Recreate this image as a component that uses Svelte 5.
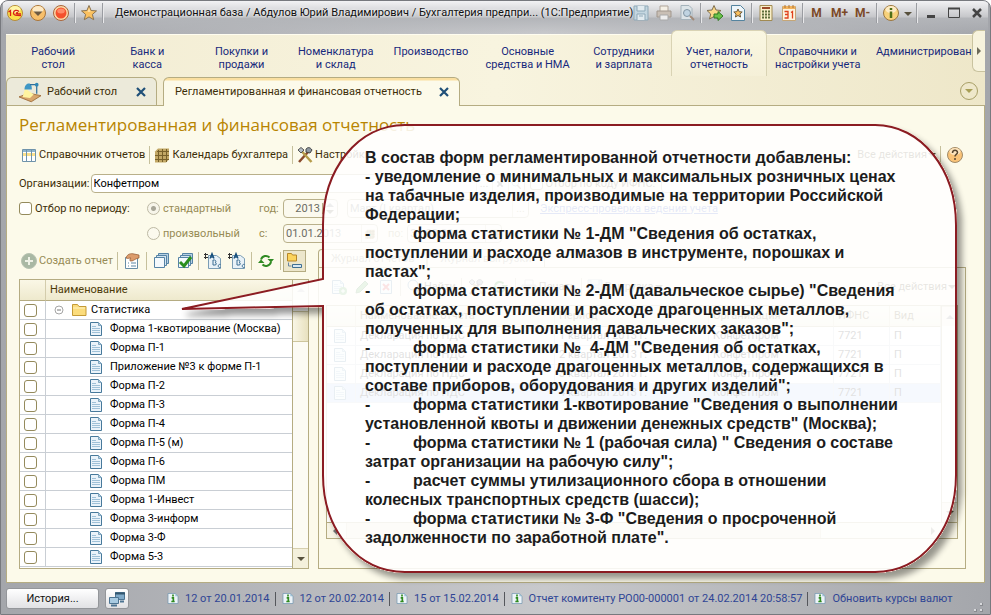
<script>
  const sections = [
    { label: 'Рабочий\nстол', size: 94 },
    { label: 'Банк и\nкасса', size: 94 },
    { label: 'Покупки и\nпродажи', size: 94 },
    { label: 'Номенклатура\nи склад', size: 94 },
    { label: 'Производство', size: 96 },
    { label: 'Основные\nсредства и НМА', size: 97 },
    { label: 'Сотрудники\nи зарплата', size: 95 },
    { label: 'Учет, налоги,\nотчетность', size: 95 },
    { label: 'Справочники и\nнастройки учета', size: 102 },
    { label: 'Администрировани', size: 116 }
  ];

  const forms = [
    'Форма 1-квотирование (Москва)',
    'Форма П-1',
    'Приложение №3 к форме П-1',
    'Форма П-2',
    'Форма П-3',
    'Форма П-4',
    'Форма П-5 (м)',
    'Форма П-6',
    'Форма ПМ',
    'Форма 1-Инвест',
    'Форма 3-информ',
    'Форма 3-Ф',
    'Форма 5-3'
  ];

  const reports = [1, 2, 3, 4].map((quarter) => ({
    name: 'Декларация по НДС',
    period: `${quarter} квартал 2013 г.`,
    company: 'Конфетпром',
    office: '7721',
    kind: 'П'
  }));

  const messages = [
    '12 от 20.01.2014',
    '12 от 20.02.2014',
    '15 от 15.02.2014',
    'Отчет комитенту РО00-000001 от 24.02.2014 20:58:57',
    'Обновить курсы валют'
  ];

  const note = [
    'В состав форм регламентированной отчетности добавлены:',
    '- уведомление о минимальных и максимальных розничных ценах',
    'на табачные изделия, производимые на территории Российской',
    'Федерации;',
    '-\tформа статистики № 1-ДМ "Сведения об остатках,',
    'поступлении и расходе алмазов в инструменте, порошках и',
    'пастах";',
    '-\tформа статистики № 2-ДМ (давальческое сырье) "Сведения',
    'об остатках, поступлении и расходе драгоценных металлов,',
    'полученных для выполнения давальческих заказов";',
    '-\tформа статистики №  4-ДМ "Сведения об остатках,',
    'поступлении и расходе драгоценных металлов, содержащихся в',
    'составе приборов, оборудования и других изделий";',
    '-\tформа статистики 1-квотирование "Сведения о выполнении',
    'установленной квоты и движении денежных средств" (Москва);',
    '-\tформа статистики № 1 (рабочая сила) " Сведения о составе',
    'затрат организации на рабочую силу";',
    '-\tрасчет суммы утилизационного сбора в отношении',
    'колесных транспортных средств (шасси);',
    '-\tформа статистики № 3-Ф "Сведения о просроченной',
    'задолженности по заработной плате".'
  ].join('\n');

  let activeSection = $state(7);
  let periodFilter = $state(false);
</script>

{#snippet icon(name)}
  <svg class="icon" width="18" height="18" viewBox="0 0 18 18" fill="none" aria-hidden="true">
    {#if name === 'logo'}
      <circle cx="9" cy="9" r="7.5" fill="#fbe04a" stroke="#b58a3a" />
      <ellipse cx="9" cy="5.5" rx="5.5" ry="3.5" fill="#fff6a8" />
      <path d="M2.500 8 4.500 6.500V12M13 7.500C11 5.500 7.500 6 7.500 9c0 2.500 2 2.500 7.500 2.500M12 8.800c-2-.5-2 1-1 1h4" stroke="#d8201a" stroke-width="1.300" />
    {:else if name === 'menu'}
      <circle cx="9" cy="9" r="7.5" fill="#f7bf6a" stroke="#a8743a" />
      <ellipse cx="9" cy="5.5" rx="5.5" ry="3.5" fill="#fde9c4" />
      <path d="M4.5 7.5h9L9 12z" fill="#6d5a42" />
    {:else if name === 'record'}
      <circle cx="9" cy="9" r="7.5" fill="#fbd9a8" stroke="#a8643a" />
      <circle cx="9" cy="9" r="5.5" fill="#f4502c" />
      <ellipse cx="9" cy="7" rx="3.8" ry="2.5" fill="#ff8a68" />
    {:else if name === 'star'}
      <path d="m9 1.500 2.100 5 5.400.4-4.100 3.500 1.300 5.300L9 12.900l-4.700 2.800 1.300-5.300L1.500 6.900l5.400-.4z" fill="#fbc15f" stroke="#8a7350" />
      <path d="m9 4 1.200 3.500 3.300.2H4.500l3.300-.2z" fill="#fee6b4" />
    {:else if name === 'save'}
      <path d="M2 2h14v14H2z" fill="#c4d6e0" stroke="#8fa9b8" />
      <path d="M5 2v5h8V2M5 16v-6h8v6M7 12h4" fill="#e2ebf0" stroke="#8fa9b8" />
    {:else if name === 'print'}
      <path d="M5 8V2h8v6" fill="#f5f0e6" stroke="#b0a59a" />
      <path d="M2 7h14v6H2z" fill="#c9bfb5" stroke="#a1978d" />
      <path d="M5 11h8v5H5z" fill="#eee" stroke="#a9a9a9" />
    {:else if name === 'preview'}
      <path d="M3 1.5h8l3 3v11H3z" fill="#dce4e8" stroke="#a5b3bb" />
      <circle cx="9" cy="9" r="3.5" fill="#c0d4e2" stroke="#8195a3" />
      <path d="m12 12 4 4" stroke="#a28a78" stroke-width="2" />
    {:else if name === 'stargo'}
      <path d="m8 1.5 2 4.5 5 .5-3.700 3.400 1.200 5L8 12.500 3.500 15l1.200-5L1 6.500 6 6z" fill="#fbd98a" stroke="#7f6f50" />
      <path d="M8 10h4V7.500l5 4.500-5 4.500V14H8z" fill="#6cc24a" stroke="#2f7a22" />
    {:else if name === 'fav'}
      <path d="M2.500 1.500h9l4 4v11h-13z" fill="#eef6fb" stroke="#55849f" />
      <path d="m9 5 1.200 2.700 3 .3-2.300 2 .7 3L9 11.500 6.400 13l.7-3-2.300-2 3-.3z" fill="#fbc15f" stroke="#6f5c3c" />
    {:else if name === 'calc'}
      <path d="M3 1.500h12v15H3z" fill="#f9efc8" stroke="#a18a52" />
      <path d="M5 4h8" stroke="#9c4a2a" stroke-width="2" />
      <path d="M5 7.500h2m1 0h2m1 0h2M5 10.500h2m1 0h2m1 0h2M5 13.500h2m1 0h2m1 0h2" stroke="#5d6e3a" stroke-width="2" />
    {:else if name === 'calendar'}
      <path d="M2.500 2.500h13v14h-13z" fill="#fdf3df" stroke="#c5a677" />
      <path d="M3 2h12v3H3z" fill="#f2b25c" />
      <path d="M5 1v3M9 1v3M13 1v3" stroke="#a8743a" />
      <path d="M4.500 7.500h3.500v6.500H4.500M5 10.500h3M11 8.500l1.500-1V14.500" stroke="#e0401c" stroke-width="1.300" />
    {:else if name === 'info'}
      <circle cx="9" cy="9" r="7.500" fill="#f8d27c" stroke="#9a7640" />
      <ellipse cx="9" cy="5.500" rx="5.500" ry="3.500" fill="#fdebc4" />
      <path d="M9 4v2M9 7.500V14" stroke="#4f6f18" stroke-width="2.500" />
    {:else if name === 'help'}
      <circle cx="9" cy="9" r="7.500" fill="#fac377" stroke="#a08a68" />
      <ellipse cx="9" cy="5.500" rx="5.500" ry="3.500" fill="#fde4bd" />
      <path d="M6.500 7c0-3.500 5-3.500 5-.5 0 2-2.500 1.800-2.500 4M9 12v2" stroke="#5a4830" stroke-width="1.500" />
    {:else if name === 'lamp'}
      <path d="m0 13 8-3 10 2-8 5z" fill="#d8a66c" stroke="#9b6a38" stroke-width=".7" />
      <path d="M5 6 3 13l6 1 3-3z" fill="#fff4a0" />
      <path d="M4.500 7c0-3 1.500-5 3.500-5s2.500 2 2.500 5z" fill="#3f97c5" />
      <path d="M9 3h5.500v7.500" stroke="#2f6f9c" />
      <circle cx="14.500" cy="3" r="1.500" fill="#2f87b5" />
    {:else if name === 'columns'}
      <path d="M2.500 3.500h13v12h-13z" fill="#fff" stroke="#6f93ab" />
      <path d="M3 4h12v2H3z" fill="#8fb4cc" />
      <path d="M3 7h12v3H3z" fill="#fbe08c" />
      <path d="M6.500 4v11M11.500 4v11" stroke="#6f93ab" />
    {:else if name === 'grid'}
      <path d="M5 2.500h11v11l-3 3H2v-11z" fill="#c2a765" />
      <path d="M2 9.500h14M2 13.500h14M5.500 4v12M9.500 3v13M13.500 3v13M4 5.500h12" stroke="#77602a" />
    {:else if name === 'tools'}
      <path d="m3 16 9-10" stroke="#8a4a2c" stroke-width="2.500" />
      <path d="m15.500 16-10-11" stroke="#b59b4a" stroke-width="2.500" />
      <path d="m2 4 3-2.500L8 4 5 7z" fill="#b4bcc2" stroke="#555" />
      <path d="M10 3c2-2 4-2 6 1l-2 3-4-1z" fill="#8f98a0" stroke="#444" />
    {:else if name === 'add'}
      <circle cx="9" cy="9" r="7.500" fill="#a9b8a4" stroke="#b8c3b2" />
      <path d="M9 5v8M5 9h8" stroke="#eef1e6" stroke-width="2" />
    {:else if name === 'hand'}
      <path d="M2.500 5.500h12v11h-12z" fill="#fff" stroke="#678da6" />
      <path d="M5 11h1m2 0h5M5 14h1m2 0h5" stroke="#5c87a3" />
      <path d="M3 6c1-4 5-5 8-4l5 1v3c-5 1-5 3-8 3-2 0-1-2 0-3-2 0-3 1-5 0z" fill="#dc9c6c" stroke="#90552c" stroke-width=".7" />
    {:else if name === 'stack' || name === 'checks'}
      <path d="M6.500 1.500h10v10h-10z" fill="#b6d0e2" stroke="#5583a5" />
      <path d="M4.500 3.500h10v10h-10z" fill="#d5e5f0" stroke="#5583a5" />
      <path d="M2.500 5.500h10v10h-10z" fill="#f4f9fc" stroke="#5583a5" />
      {#if name === 'checks'}
        <path d="m4 10 4 4 7-9" stroke="#2b8f1e" stroke-width="3" />
      {/if}
    {:else if name === 'sort' || name === 'sortback'}
      <path d="M4.500 3.500h8l4 3v10h-12z" fill="#e8f1f7" stroke="#7b9db5" />
      <path d="M0 2.500h4M0 5.500h4M1.500 1v6" stroke="#333" />
      <path d="m6 6.500 2-5 2 5M7 5h2" stroke="#174f7c" stroke-width="1.300" />
      <path d="M9 8v5h2c2 0 1.500-2.500 0-2.500 1.500 0 1-2.500-.5-2.500zM16.500 12.500c-3-1-3 4 0 3" stroke="#3c6f94" />
    {:else if name === 'refresh'}
      <path d="M4 7.500C5.500 3.500 10 3 12.500 5.500M14 10c-1 4-6 5-8.500 2.500" stroke="#2f8a22" stroke-width="2" />
      <path d="M10.500 7h6.500L14 10.500zM7.500 11H1l3-3.500z" fill="#2f8a22" />
    {:else if name === 'tree'}
      <path d="M2.500 1.500h4l1 1.500h4v6h-9z" fill="#fbd35c" stroke="#b5862a" />
      <path d="M7.500 12.500h9v3h-9z" fill="#d7e8f4" stroke="#3f6f92" />
      <path d="M3.500 10.500v3.500h3" stroke="#6a86a0" />
    {:else if name === 'folder'}
      <path d="M2.500 3.500h5l1.500 2h7v9h-13.500z" fill="#fbdc7c" stroke="#c49a36" />
      <path d="M3 7h12" stroke="#fff2c0" />
    {:else if name === 'doc' || name === 'newdoc'}
      <path d="M3.500 2.500h8l3 3v10h-11z" fill="#eaf3fa" stroke="#47799b" />
      <path d="M11.500 2.500v3h3" fill="#b8d4e6" stroke="#7fa5be" />
      <path d="M5 6.500h4M5 8.500h8M5 10.500h8M5 12.500h8" stroke="#9fc1d8" />
      {#if name === 'newdoc'}
        <circle cx="14" cy="13" r="4" fill="#4fa446" />
        <path d="M14 11v4M12 13h4" stroke="#fff" />
      {/if}
    {:else if name === 'pencil'}
      <path d="m3 15 1-4 8-8 3 3-8 8z" fill="#58b046" stroke="#34732a" />
    {:else if name === 'delete'}
      <path d="M3.500 2.500h11v13h-11z" fill="#eaf3fa" stroke="#47799b" />
      <path d="m6 6 6 6M12 6l-6 6" stroke="#e02020" stroke-width="2" />
    {:else if name === 'find'}
      <circle cx="8" cy="7" r="5" stroke="#47799b" />
      <path d="m11 11 5 5" stroke="#8c6548" stroke-width="2" />
    {:else if name === 'message'}
      <path d="M1.500 1.500h11l4 4v11h-15z" fill="#edf4f8" stroke="#6b93ad" />
      <path d="M12.500 1.500v4h4z" fill="#9cc0d6" />
      <path d="M9 3V6M7 8h2.500v5.500M6.500 13.500h5" stroke="#2f8a1e" stroke-width="2.500" />
    {:else if name === 'windows'}
      <path d="M7.500 2.500h9v7h-9z" fill="#7fa9c8" stroke="#4d7492" />
      <path d="M7 3.500h10" stroke="#33566f" stroke-width="2" />
      <path d="M1.500 7.500h9v6h-9z" fill="#a9cbe2" stroke="#4d7492" />
      <path d="M3 15.500h6M12 11.500h4" stroke="#4d7492" stroke-width="2" />
    {:else if name === 'minimize'}
      <path d="M5 12.500h8" stroke="#444" stroke-width="3" />
    {:else if name === 'maximize'}
      <path d="M3.500 4.500h11v9h-11z" stroke="#444" />
      <path d="M3 4.500h12" stroke="#444" stroke-width="2" />
    {:else if name === 'close'}
      <path d="m5 5 8 8M13 5l-8 8" stroke="#444" stroke-width="2.500" />
    {:else if name === 'cross'}
      <path d="m5 5 8 8M13 5l-8 8" stroke="#1f4f78" stroke-width="2.200" />
    {:else if name === 'collapse'}
      <circle cx="9" cy="9" r="4" stroke="#a5a5a5" />
      <path d="M7 9h4" stroke="#777" />
    {/if}
  </svg>
{/snippet}

{#snippet tool(name, title)}
  <button class="tool" {title} aria-label={title}>{@render icon(name)}</button>
{/snippet}

<div class="window">
  <header class="titlebar">
    {@render tool('logo', 'Главное меню')}
    {@render tool('menu', 'Меню')}
    {@render tool('record', 'Действия')}
    <i class="sep"></i>
    {@render tool('star', 'Избранное')}
    <i class="sep"></i>
    <span class="title">Демонстрационная база / Абдулов Юрий Владимирович / Бухгалтерия предпри... (1С:Предприятие)</span>
    {@render tool('save', 'Сохранить')}
    {@render tool('print', 'Печать')}
    {@render tool('preview', 'Просмотр')}
    <i class="sep"></i>
    {@render tool('stargo', 'Добавить в избранное')}
    {@render tool('fav', 'Избранное')}
    <i class="sep"></i>
    {@render tool('calc', 'Калькулятор')}
    {@render tool('calendar', 'Календарь')}
    <i class="sep"></i>
    <button class="tool memory">M</button>
    <button class="tool memory">M+</button>
    <button class="tool memory">M-</button>
    <i class="sep"></i>
    {@render tool('info', 'Справка')}
    <button class="more" aria-label="Еще"><i class="arrow down"></i></button>
    <i class="sep"></i>
    <div class="system">
      {@render tool('minimize', 'Свернуть')}
      {@render tool('maximize', 'Развернуть')}
      {@render tool('close', 'Закрыть')}
    </div>
  </header>

  <div class="top">
    <nav class="sections">
      {#each sections as section, i}
        <button
          class="section"
          class:active={activeSection === i}
          style="flex-basis: {section.size}px"
          onclick={() => (activeSection = i)}
        >{section.label}</button>
      {/each}
      <button class="scroll-right" aria-label="Вперед"><i class="arrow right"></i></button>
    </nav>
    <div class="doc-tabs">
      <div class="doc-tab home">
        {@render icon('lamp')}
        <span>Рабочий стол</span>
        <button aria-label="Закрыть">{@render icon('cross')}</button>
      </div>
      <div class="doc-tab current">
        <span>Регламентированная и финансовая отчетность</span>
        <button aria-label="Закрыть">{@render icon('cross')}</button>
      </div>
      <button class="round" aria-label="Список окон"><i class="arrow down"></i></button>
    </div>
  </div>

  <main class="page">
    <h1>Регламентированная и финансовая отчетность</h1>

    <div class="commands">
      <button class="command">{@render icon('columns')}Справочник отчетов</button>
      <i class="sep"></i>
      <button class="command">{@render icon('grid')}Календарь бухгалтера</button>
      <i class="sep"></i>
      <button class="command">{@render icon('tools')}Настройки</button>
      <span class="spacer"></span>
      <button class="command">Все действия <i class="arrow down"></i></button>
      <i class="sep"></i>
      {@render tool('help', 'Справка')}
    </div>

    <div class="filters">
      <div class="line">
        <label for="org">Организации:</label>
        <div class="field org">
          <input id="org" value="Конфетпром" />
          <button aria-label="Выбрать">...</button>
          <button aria-label="Очистить">{@render icon('close')}</button>
          <button aria-label="Открыть">{@render icon('find')}</button>
        </div>
        <label class="check ifns"><input type="checkbox" />Отбор по коду ИФНС:</label>
        <div class="field code"><input aria-label="Код ИФНС" /></div>
      </div>
      <div class="line period">
        <label class="check"><input type="checkbox" bind:checked={periodFilter} />Отбор по периоду:</label>
        <label class="radio"><input type="radio" name="period" checked disabled />стандартный</label>
        <label class="short" for="year">год:</label>
        <div class="field off year">
          <input id="year" value="2013" disabled />
          <span class="spin"><i class="arrow up"></i><i class="arrow down"></i></span>
        </div>
        <div class="field off quarter">
          <input aria-label="Квартал" value="Март (I квартал)" disabled />
          <button disabled aria-label="Выбрать">...</button>
        </div>
        <a href="#check">Экспресс-проверка ведения учета</a>
      </div>
      <div class="line period">
        <span class="check"></span>
        <label class="radio"><input type="radio" name="period" disabled />произвольный</label>
        <label class="short" for="from">с:</label>
        <div class="field off date">
          <input id="from" value="01.01.2013" disabled />
          <button disabled aria-label="Календарь">{@render icon('grid')}</button>
        </div>
        <label class="until" for="to">по:</label>
        <div class="field off date">
          <input id="to" value="31.03.2013" disabled />
          <button disabled aria-label="Календарь">{@render icon('grid')}</button>
        </div>
      </div>
    </div>

    <div class="columns">
      <section class="forms">
        <div class="commands">
          <button class="command muted" disabled>{@render icon('add')}Создать отчет</button>
          <i class="sep"></i>
          {@render tool('hand', 'Изменить')}
          <i class="sep"></i>
          {@render tool('stack', 'Снять флажки')}
          {@render tool('checks', 'Установить флажки')}
          <i class="sep"></i>
          {@render tool('sort', 'Сортировать')}
          {@render tool('sortback', 'Сортировать обратно')}
          <i class="sep"></i>
          {@render tool('refresh', 'Обновить')}
          <i class="sep"></i>
          <button class="tool pressed" aria-label="По группам">{@render icon('tree')}</button>
        </div>
        <div class="list">
          <table>
            <thead>
              <tr><th class="mark"></th><th>Наименование</th></tr>
            </thead>
            <tbody>
              <tr>
                <td class="mark"><input type="checkbox" aria-label="Статистика" /></td>
                <td><span class="group">{@render icon('collapse')}{@render icon('folder')}Статистика</span></td>
              </tr>
              {#each forms as form}
                <tr>
                  <td class="mark"><input type="checkbox" aria-label={form} /></td>
                  <td><span class="item">{@render icon('doc')}{form}</span></td>
                </tr>
              {/each}
            </tbody>
          </table>
          <div class="scrollbar" aria-hidden="true">
            <span class="cap faint"><i class="arrow up"></i></span>
            <span class="thumb"></span>
            <span class="spacer"></span>
            <span class="cap"><i class="arrow down"></i></span>
          </div>
        </div>
      </section>

      <section class="journal">
        <div class="journal-tabs">
          <button class="chosen">Журнал отчетов</button>
          <button>Журнал выгрузки</button>
        </div>
        <div class="panel">
          <div class="commands">
            {@render tool('newdoc', 'Создать')}
            {@render tool('pencil', 'Изменить')}
            {@render tool('delete', 'Удалить')}
            <i class="sep"></i>
            <button class="command">{@render icon('find')}Найти</button>
            <i class="sep"></i>
            {@render tool('tools', 'Настроить')}
            {@render tool('refresh', 'Обновить')}
            <i class="sep"></i>
            <button class="command">{@render icon('print')}Печать</button>
            <i class="sep"></i>
            <button class="command">{@render icon('save')}Выгрузка <i class="arrow down"></i></button>
            <span class="spacer"></span>
            <button class="command">Все действия <i class="arrow down"></i></button>
          </div>
          <div class="reports">
            <div class="reports-body">
              <table>
                <thead>
                  <tr>
                    <th class="pic"></th>
                    <th class="name">Наименование отчета</th>
                    <th class="quarter-col">Период</th>
                    <th>Организация</th>
                    <th class="office">ИФНС</th>
                    <th class="kind">Вид</th>
                  </tr>
                </thead>
                <tbody>
                  {#each reports as report, i}
                    <tr class:selected={i === 3}>
                      <td class="pic">{@render icon('doc')}</td>
                      <td>{report.name}</td>
                      <td>{report.period}</td>
                      <td>{report.company}</td>
                      <td>{report.office}</td>
                      <td>{report.kind}</td>
                    </tr>
                  {/each}
                </tbody>
              </table>
              <div class="scrollbar" aria-hidden="true">
                <span class="cap"><i class="arrow up"></i></span>
                <span class="spacer"></span>
                <span class="cap"><i class="arrow down"></i></span>
              </div>
            </div>
            <div class="hscroll" aria-hidden="true">
              <i class="arrow left"></i>
              <span class="hthumb"></span>
              <i class="arrow right"></i>
            </div>
          </div>
        </div>
      </section>
    </div>
  </main>

  <footer class="statusbar">
    <button class="push history">История...</button>
    <button class="push" aria-label="Окна">{@render icon('windows')}</button>
    <div class="messages">
      {#each messages as message}
        <a href="#message">{@render icon('message')}{message}</a>
      {/each}
    </div>
    <svg class="grip" width="12" height="12" viewBox="0 0 12 12" aria-hidden="true">
      <path d="M7 1h3v3H7zM7 7h3v3H7zM1 7h3v3H1z" fill="#888a8f" />
      <path d="M7 1h2v2H7zM7 7h2v2H7zM1 7h2v2H1z" fill="#d8d9dc" />
    </svg>
  </footer>

  <aside class="callout">
    <svg width="800" height="470" viewBox="0 0 800 470" aria-hidden="true">
      <!-- the shadow is cut out under the balloon, so the page shows through it clean -->
      <filter id="shadow" x="-5%" y="-5%" width="110%" height="110%">
        <feComponentTransfer in="SourceAlpha" result="solid">
          <feFuncA type="linear" slope="8" />
        </feComponentTransfer>
        <feGaussianBlur in="solid" stdDeviation="3" />
        <feOffset dx="5" dy="6" />
        <feComponentTransfer>
          <feFuncA type="linear" slope="0.4" />
        </feComponentTransfer>
        <feComposite in2="solid" operator="out" result="cast" />
        <feMerge>
          <feMergeNode in="cast" />
          <feMergeNode in="SourceGraphic" />
        </feMerge>
      </filter>
      <path
        filter="url(#shadow)"
        d="M4 189 145 159V105C145 49 180 5 227 5H697C743 5 778 49 778 105V355C778 410 743 452 697 452H227C180 452 145 410 145 355V186Z"
      />
    </svg>
    <p>{note}</p>
  </aside>
</div>

<style>
  :global(body) {
    margin: 0;
  }

  .window {
    position: relative;
    display: flex;
    flex-direction: column;
    min-height: 100vh;
    box-sizing: border-box;
    overflow: hidden;
    border: 1px solid #77797e;
    border-radius: 8px 8px 0 0;
    padding: 0 5px;
    background: linear-gradient(90deg, #a4a6ab, #c8c9cc 55%, #a4a6ab);
    font: 11px/14px Roboto, 'Liberation Sans', sans-serif;
    color: #3c2e08;
    white-space: nowrap;
  }

  .window * {
    box-sizing: border-box;
  }

  button {
    border: 0;
    padding: 0;
    background: none;
    font: inherit;
    color: inherit;
    cursor: pointer;
  }

  .icon {
    display: block;
    flex: none;
  }

  .spacer {
    flex: 1;
  }

  .tool {
    display: flex;
    align-items: center;
    justify-content: center;
    flex: none;
    width: 23px;
    height: 22px;
  }

  .sep {
    flex: none;
    width: 1px;
    height: 18px;
    margin: 0 2px;
    background: #c6c09c;
  }

  .arrow {
    display: inline-block;
    flex: none;
    width: 0;
    height: 0;
    border: 4px solid transparent;
  }

  .arrow.down {
    border-top-color: #57503c;
    border-bottom: 0;
  }

  .arrow.up {
    border-bottom-color: #777;
    border-top: 0;
  }

  .arrow.right {
    border-left-color: #6d6a58;
    border-right: 0;
  }

  .arrow.left {
    border-right-color: #777;
    border-left: 0;
  }

  .titlebar {
    display: flex;
    align-items: center;
    height: 33px;
    margin: 0 -3px;
    padding-bottom: 9px;
    background: linear-gradient(#f2f2f4, #c6c7ca 48%, #b3b5b9 52%, transparent);
    color: #111;
  }

  .titlebar .sep {
    height: 20px;
    background: #9a9ca1;
    border-right: 1px solid #e8e8ea;
    width: 2px;
    margin: 0 1px 0 2px;
  }

  .title {
    flex: 1;
    min-width: 0;
    padding-left: 10px;
    text-shadow: 0 0 3px #fff;
  }

  .memory {
    font: bold 12px/14px Roboto, sans-serif;
    color: #7c4a28;
  }

  .more {
    width: 12px;
  }

  .system {
    display: flex;
  }

  .top {
    display: flex;
    flex-direction: column;
    border-top: 1px solid #fffdf0;
    background: linear-gradient(90deg, #f2ecd2, #f8f4df 50%, #eee7c9);
  }

  .sections {
    display: flex;
    height: 42px;
    position: relative;
  }

  .section {
    flex: 1 1 auto;
    min-width: 0;
    display: flex;
    justify-content: center;
    height: 46px;
    padding-top: 10px;
    line-height: 13px;
    white-space: pre;
    color: #17297c;
  }

  .section.active {
    margin-top: -5px;
    height: 46px;
    padding-top: 14px;
    border: 1px solid #d9d3b4;
    border-bottom: 0;
    border-radius: 6px 6px 0 0;
    background: linear-gradient(#faf7e2, #f5f0d8);
  }

  .scroll-right {
    position: absolute;
    top: -5px;
    right: 0;
    display: flex;
    align-items: center;
    justify-content: center;
    width: 13px;
    height: 42px;
    border: 1px solid #c9c39f;
    border-right: 0;
    border-radius: 6px 0 0 6px;
    background: #f7f3dd;
  }

  .doc-tabs {
    display: flex;
    align-items: flex-end;
    height: 29px;
    border-bottom: 1px solid #b5ac82;
  }

  .doc-tab {
    display: flex;
    align-items: center;
    justify-content: space-between;
    height: 28px;
    padding: 0 6px 0 11px;
    border: 1px solid #b5ac82;
    border-bottom: 0;
    border-radius: 6px 6px 0 0;
  }

  .home {
    width: 151px;
    margin-right: 6px;
    background: #eceada;
  }

  .home span {
    flex: 1;
    padding-left: 11px;
  }

  .home > .icon {
    width: 24px;
    height: 22px;
    margin: 0 -6px 0 0;
  }

  .current {
    width: 297px;
    height: 29px;
    margin-bottom: -1px;
    background: linear-gradient(#fadfa0 2px, #fcfaea 3px);
  }

  .round {
    display: flex;
    align-items: center;
    justify-content: center;
    width: 18px;
    height: 18px;
    margin: 0 7px 5px auto;
    border: 1px solid #a89f66;
    border-radius: 50%;
  }

  .round .arrow {
    border-top-color: #a89f56;
  }

  .page {
    flex: 1;
    display: flex;
    flex-direction: column;
    border: 1px solid #b5ac82;
    border-top: 0;
    padding: 8px 18px 13px 12px;
    background: #fcfaea;
  }

  h1 {
    margin: 0;
    font: 17px/22px 'Open Sans', sans-serif;
    color: #b88400;
  }

  .commands {
    display: flex;
    align-items: center;
    height: 24px;
  }

  .page > .commands {
    margin: 7px 0;
  }

  .command {
    display: flex;
    align-items: center;
    gap: 1px;
    flex: none;
    padding: 0 2px 0 1px;
  }

  .muted {
    color: #978b55;
  }

  .filters {
    display: flex;
    flex-direction: column;
    gap: 6px;
  }

  .line {
    display: flex;
    align-items: center;
    height: 19px;
  }

  .field {
    display: flex;
    align-items: center;
    height: 19px;
    border: 1px solid #b9b08a;
    border-radius: 4px;
    background: #fff;
  }

  .field input {
    flex: 1;
    min-width: 0;
    border: 0;
    padding: 0 2px;
    background: none;
    font: inherit;
    color: #000;
  }

  .field button {
    display: flex;
    align-items: center;
    justify-content: center;
    flex: none;
    width: 16px;
    height: 17px;
    border-left: 1px solid #d6cfae;
  }

  .field .icon {
    width: 12px;
    height: 12px;
  }

  .off {
    background: #fbf9ee;
  }

  .off input {
    color: #6c6c64;
  }

  .org {
    width: 434px;
    margin-left: 1px;
  }

  .ifns {
    margin-left: 5px;
  }

  .code {
    width: 160px;
    margin-left: 6px;
  }

  .check,
  .radio {
    display: flex;
    align-items: center;
    gap: 3px;
  }

  input[type='checkbox'],
  input[type='radio'] {
    appearance: none;
    flex: none;
    width: 13px;
    height: 13px;
    margin: 0;
    border: 1px solid #948a5c;
    border-radius: 3px;
    background: #fff;
  }

  input[type='radio'] {
    border-radius: 50%;
    border-color: #bdb9a4;
    background: #fbf9ee;
  }

  input[type='radio']:checked {
    background: radial-gradient(#a8a698 2px, #f7f5ea 3px);
  }

  .period {
    color: #978b55;
  }

  .period .check {
    width: 128px;
    color: #3c2e08;
  }

  .radio {
    width: 112px;
  }

  .short {
    width: 24px;
  }

  .year {
    width: 55px;
  }

  .year input {
    text-align: right;
  }

  .spin {
    display: flex;
    flex-direction: column;
    gap: 3px;
    padding: 0 3px;
    border-left: 1px solid #b9b08a;
  }

  .quarter {
    width: 182px;
    margin: 0 11px 0 9px;
  }

  .date {
    width: 95px;
  }

  .until {
    padding: 0 4px 0 10px;
  }

  .line a {
    color: #2a4cc0;
  }

  .columns {
    flex: 1;
    display: flex;
    gap: 9px;
    margin-top: 6px;
  }

  .forms {
    width: 290px;
    flex: none;
    display: flex;
    flex-direction: column;
  }

  .forms .commands {
    margin-bottom: 6px;
    justify-content: space-between;
    padding-right: 3px;
  }

  .pressed {
    border: 1px solid #b5ac82;
    background: #ece6cb;
  }

  .list {
    flex: 1;
    display: flex;
    border: 1px solid #b5ac82;
    background: #fff;
  }

  table {
    flex: 1;
    align-self: flex-start;
    border-collapse: separate;
    border-spacing: 0;
    table-layout: fixed;
    color: #000;
  }

  th {
    height: 21px;
    padding: 0 4px;
    border-bottom: 1px solid #b5ac82;
    border-right: 1px solid #d3ccac;
    background: linear-gradient(#faf7e6, #eee9cd);
    font-weight: normal;
    text-align: left;
    color: #4c3a08;
  }

  td {
    height: 19px;
    padding: 0 4px;
    border-bottom: 1px solid #c9ced4;
    border-right: 1px solid #c9ced4;
  }

  .forms th:last-child,
  .forms td:last-child {
    border-right: 0;
  }

  .mark {
    width: 26px;
  }

  .mark input {
    display: block;
  }

  .group,
  .item {
    display: flex;
    align-items: center;
    height: 18px;
    line-height: 18px;
  }

  .group .icon {
    margin-right: 2px;
  }

  .group .icon:last-of-type {
    margin-right: 3px;
  }

  .item {
    padding-left: 37px;
    gap: 5px;
  }

  .scrollbar {
    display: flex;
    flex-direction: column;
    width: 16px;
    flex: none;
    border-left: 1px solid #b5ac82;
    background: #fcfbf4;
  }

  .cap {
    display: flex;
    align-items: center;
    justify-content: center;
    height: 20px;
    background: #f4f0dc;
    border-top: 1px solid #d6cfae;
  }

  .faint {
    border-top: 0;
    opacity: 0.5;
  }

  .thumb {
    height: 31px;
    margin-top: 11px;
    border: 1px solid #cdc59d;
    border-left: 0;
    border-right: 0;
    background: linear-gradient(90deg, #f9f6e6, #e8e1bf);
  }

  .journal {
    flex: 1;
    min-width: 0;
    display: flex;
    flex-direction: column;
  }

  .journal-tabs {
    display: flex;
    height: 18px;
  }

  .journal-tabs button {
    padding: 0 12px;
    border: 1px solid #b5ac82;
    border-bottom: 0;
    border-radius: 4px 4px 0 0;
    color: #8a8268;
  }

  .panel {
    flex: 1;
    display: flex;
    flex-direction: column;
    border: 1px solid #b5ac82;
    padding: 7px 7px 29px;
  }

  .panel .commands {
    margin-bottom: 6px;
    gap: 1px;
  }

  .reports {
    flex: 1;
    display: flex;
    flex-direction: column;
    border: 1px solid #b5ac82;
    background: #fff;
  }

  .reports-body {
    flex: 1;
    display: flex;
  }

  .pic {
    width: 29px;
  }

  .name {
    width: 199px;
  }

  .quarter-col {
    width: 154px;
  }

  .office {
    width: 56px;
  }

  .kind {
    width: 51px;
  }

  .selected td {
    background: #b9d0f4;
  }

  .hscroll {
    display: flex;
    align-items: center;
    justify-content: space-between;
    height: 16px;
    padding: 0 22px 0 6px;
    border-top: 1px solid #b5ac82;
    background: #f7f4e4;
  }

  .hthumb {
    flex: 1;
    height: 15px;
    margin: 0 110px 0 9px;
    border: 1px solid #d6cfae;
    border-width: 0 1px;
    background: #ece6cb;
  }

  .statusbar {
    display: flex;
    align-items: center;
    gap: 6px;
    height: 31px;
  }

  .push {
    display: flex;
    align-items: center;
    justify-content: center;
    flex: none;
    width: 24px;
    height: 21px;
    border: 1px solid #94969a;
    border-radius: 3px;
    background: linear-gradient(#fff, #e1e1e4);
    color: #111;
  }

  .history {
    width: 93px;
  }

  .messages {
    flex: 1;
    display: flex;
    padding-left: 26px;
    color: #2f4595;
  }

  .messages a {
    display: flex;
    align-items: center;
    gap: 6px;
    padding: 0 5px 0 6px;
    color: inherit;
    text-decoration: none;
  }

  .messages a + a {
    border-left: 1px solid #55575c;
  }

  .messages .icon {
    width: 12px;
    height: 13px;
  }

  .grip {
    align-self: flex-end;
    flex: none;
  }

  .callout {
    position: absolute;
    top: 119px;
    left: 177px;
    pointer-events: none;
  }

  .callout svg {
    display: block;
  }

  .callout path {
    fill: #fff;
    fill-opacity: 0.88;
    stroke: #8b1a20;
    stroke-width: 2;
  }

  .callout p {
    position: absolute;
    top: 28px;
    left: 187px;
    margin: 0;
    font: bold 16px/19px 'Liberation Sans', Arial, sans-serif;
    color: #1c1c1c;
    white-space: pre;
    tab-size: 48px;
  }
</style>
